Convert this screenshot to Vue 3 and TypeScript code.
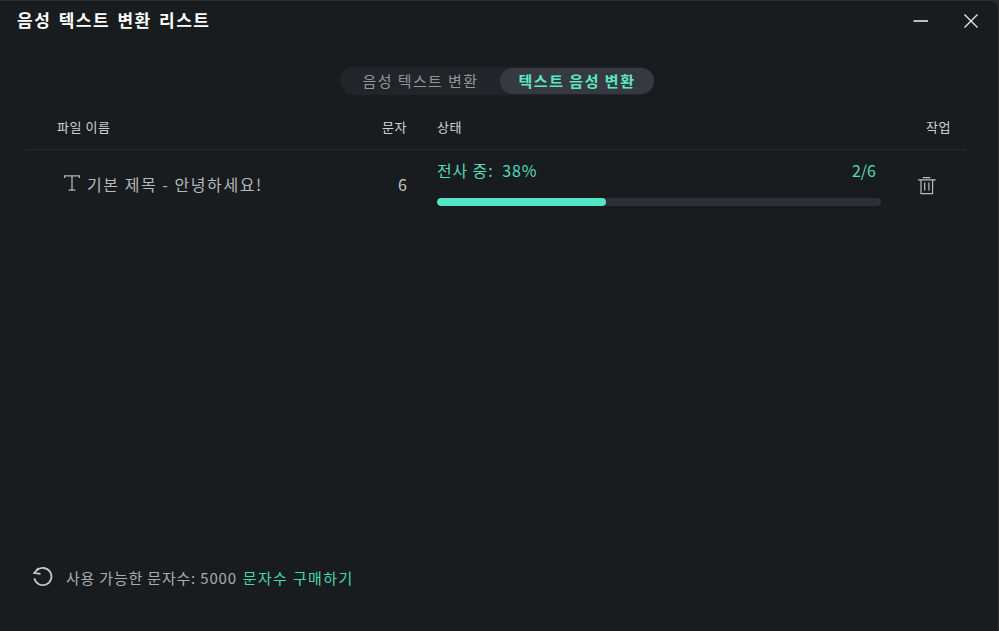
<script setup lang="ts">
import { ref } from 'vue'

interface Job { name: string; chars: number; percent: number; done: string }

const activeTab = ref<number>(1)
const tabs: string[] = ['음성 텍스트 변환', '텍스트 음성 변환']
const jobs = ref<Job[]>([
  { name: '기본 제목 - 안녕하세요!', chars: 6, percent: 38, done: '2/6' },
])
</script>

<template>
  <div class="win">
    <header class="titlebar">
      <span class="title">음성 텍스트 변환 리스트</span>
      <div class="win-btns">
        <svg class="min" width="16" height="16" viewBox="0 0 16 16"><path d="M.5 8h14.5" stroke="#e4e6e8" stroke-width="1.6" /></svg>
        <svg class="close" width="16" height="16" viewBox="0 0 16 16"><path d="M1.5 1.5l13 13M14.5 1.5l-13 13" stroke="#e4e6e8" stroke-width="1.4" /></svg>
      </div>
    </header>

    <div class="tabs-row">
      <div class="tabs">
        <button v-for="(t, i) in tabs" :key="t" class="tab" :class="{ active: activeTab === i }" @click="activeTab = i">{{ t }}</button>
      </div>
    </div>

    <div class="table">
      <div class="row head">
        <span class="c-name">파일 이름</span>
        <span class="c-chars">문자</span>
        <span class="c-status">상태</span>
        <span class="c-action">작업</span>
      </div>
      <div v-for="j in jobs" :key="j.name" class="row item">
        <div class="c-name name-cell">
          <svg width="16" height="18" viewBox="0 0 16 18" fill="none" stroke="#b0b3b6" stroke-width="1.3">
            <path d="M.6 3V.9h14.8V3M8 .9v14.3M4.6 15.2h6.8" />
          </svg>
          <span class="name-text">{{ j.name }}</span>
        </div>
        <span class="c-chars count">{{ j.chars }}</span>
        <div class="c-status progress">
          <div class="progress-text">
            <span>전사 중:&nbsp; {{ j.percent }}%</span>
            <span class="done">{{ j.done }}</span>
          </div>
          <div class="bar"><div class="fill" :style="{ width: j.percent + '%' }"></div></div>
        </div>
        <div class="c-action trash">
          <svg width="18" height="18" viewBox="0 0 18 18" fill="none" stroke="#b9bcbf" stroke-width="1.2">
            <path d="M0 2.8h17.7M4.8.6h7.6M3 2.8v13.9h11.6V2.8M6.7 5.5v8M10.9 5.5v8" />
          </svg>
        </div>
      </div>
    </div>

    <footer class="foot">
      <svg width="20" height="20" viewBox="0 0 20 20" fill="none" stroke="#c4c7ca" stroke-width="1.8">
        <path d="M3.8 3.4A8.6 8.6 0 1 1 1.4 11.4" />
        <path d="M5.4 1L1.3 6l6.2.8" />
      </svg>
      <span class="quota">사용 가능한 문자수: 5000</span>
      <a class="buy">문자수 구매하기</a>
    </footer>
  </div>
</template>

<style>
html, body { margin: 0; background: #2a2d31; }
</style>

<style scoped>
.win {
  width: 999px;
  height: 631px;
  box-sizing: border-box;
  display: flex;
  flex-direction: column;
  background: #191c1f;
  border-top: 1px solid #2b2e33;
  border-right: 1px solid #2b2e33;
  border-top-right-radius: 8px;
  color: #d0d3d6;
  font-family: "Noto Sans CJK KR", "Noto Sans", sans-serif;
}
.titlebar {
  height: 39px;
  display: flex;
  align-items: center;
  justify-content: space-between;
  padding: 0 19px 0 17px;
}
.title { font-size: 17px; font-weight: 700; color: #fff; letter-spacing: 1.5px; word-spacing: 2px; position: relative; top: -1px; }
.win-btns { display: flex; gap: 34px; align-items: center; }
.tabs-row { display: flex; justify-content: center; padding: 27px 5px 0 0; }
.tabs {
  display: flex;
  height: 28px;
  border-radius: 14px;
  background: #212429;
  gap: 2px;
}
.tab {
  border: 0;
  background: none;
  padding: 0 0 2px 4px;
  width: 158px;
  height: 28px;
  border-radius: 14px;
  font: inherit;
  font-size: 15px;
  letter-spacing: 1.4px;
  color: #93979b;
}
.tab.active {
  width: 154px;
  height: 26px;
  margin-top: 1px;
  padding: 0 0 2px 1px;
  background: #363a40;
  color: #5ce8c5;
  font-weight: 700;
  letter-spacing: 1.5px;
}
.table { margin: 0 31px 0 26px; flex: 1; }
.row { display: flex; }
.head {
  height: 55px;
  align-items: center;
  font-size: 13px;
  letter-spacing: .55px;
  color: #cfd2d5;
  border-bottom: 1px solid #26292d;
  box-sizing: border-box;
  padding-top: 8px;
}
.c-name { width: 291px; padding-left: 31px; box-sizing: border-box; }
.c-chars { width: 90px; text-align: right; }
.c-status { width: 444px; margin-left: 30px; }
.c-action { flex: 1; text-align: right; padding-right: 16px; }
.item { padding-top: 9px; font-size: 16px; }
.name-cell {
  display: flex;
  align-items: center;
  gap: 7px;
  height: 36px;
  margin-top: 7px;
  padding-left: 38px;
  color: #b4b8bc;
}
.name-text { letter-spacing: 1.55px; }
.count { height: 36px; line-height: 36px; margin-top: 7px; color: #c4c7ca; }
.progress-text {
  display: flex;
  justify-content: space-between;
  padding-right: 5px;
  font-size: 16px;
  line-height: 22px;
  letter-spacing: .85px;
  color: #52dcba;
}
.done { letter-spacing: 0; }
.bar {
  margin-top: 17px;
  height: 8px;
  border-radius: 4px;
  background: #2c3036;
  overflow: hidden;
}
.fill { height: 100%; background: #54e6c4; border-radius: 4px; }
.trash { display: flex; justify-content: flex-end; padding-top: 18px; padding-right: 31px; }
.foot {
  height: 54px;
  padding: 0 0 27px 33px;
  display: flex;
  align-items: center;
  font-size: 15px;
  letter-spacing: .8px;
  color: #a9adb1;
}
.quota { margin-left: 13px; }
.buy {
  margin-left: 6px;
  letter-spacing: 1.35px;
  color: #44d9a8;
}
</style>
